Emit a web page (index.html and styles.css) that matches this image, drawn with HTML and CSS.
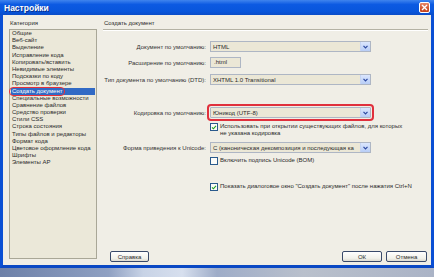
FILE: index.html
```html
<!DOCTYPE html>
<html lang="ru">
<head>
  <meta charset="UTF-8">
  <title>Настройки</title>
  <link rel="stylesheet" href="styles.css">
</head>
<body>
  <div class="window">
    <div class="titlebar">
      <span class="title">Настройки</span>
      <span class="close">
        <svg width="7" height="7" viewBox="0 0 7 7"><path d="M1 1L6 6M6 1L1 6" stroke="#fff" stroke-width="1.4"/></svg>
      </span>
    </div>

    <div class="client">
      <!-- список категорий -->
      <div class="side">
        <div class="caption">Категория</div>
        <ul class="list">
          <li>Общие</li>
          <li>Веб-сайт</li>
          <li>Выделение</li>
          <li>Исправление кода</li>
          <li>Копировать/вставить</li>
          <li>Невидимые элементы</li>
          <li>Подсказки по коду</li>
          <li>Просмотр в браузере</li>
          <li class="selected"><span class="mark">Создать документ</span></li>
          <li>Специальные возможности</li>
          <li>Сравнение файлов</li>
          <li>Средство проверки</li>
          <li>Стили CSS</li>
          <li>Строка состояния</li>
          <li>Типы файлов и редакторы</li>
          <li>Формат кода</li>
          <li>Цветовое оформление кода</li>
          <li>Шрифты</li>
          <li>Элементы AP</li>
        </ul>
      </div>

      <!-- правая часть -->
      <div class="panel">
        <div class="panel-head">Создать документ</div>

        <div class="form">
          <div class="row r1">
            <span class="label">Документ по умолчанию:</span>
            <span class="select"><span class="value">HTML</span><span class="arrow"><svg width="5" height="4" viewBox="0 0 5 4"><path d="M0.5 0.8L2.5 2.8L4.5 0.8" fill="none" stroke="#2b48a0" stroke-width="1.2"/></svg></span></span>
          </div>
          <div class="row r2">
            <span class="label">Расширение по умолчанию:</span>
            <span class="textbox">.html</span>
          </div>
          <div class="row r3">
            <span class="label">Тип документа по умолчанию (DTD):</span>
            <span class="select"><span class="value">XHTML 1.0 Transitional</span><span class="arrow"><svg width="5" height="4" viewBox="0 0 5 4"><path d="M0.5 0.8L2.5 2.8L4.5 0.8" fill="none" stroke="#2b48a0" stroke-width="1.2"/></svg></span></span>
          </div>
          <div class="row r4">
            <span class="label">Кодировка по умолчанию:</span>
            <span class="select marked"><span class="value">Юникод (UTF-8)</span><span class="arrow"><svg width="5" height="4" viewBox="0 0 5 4"><path d="M0.5 0.8L2.5 2.8L4.5 0.8" fill="none" stroke="#2b48a0" stroke-width="1.2"/></svg></span></span>
          </div>
          <div class="check c1">
            <span class="box on"><svg width="7" height="7" viewBox="0 0 7 7"><path d="M1.2 3.4L2.8 5L5.8 1.6" fill="none" stroke="#21a121" stroke-width="1.3"/></svg></span>
            <span class="text">Использовать при открытии существующих файлов, для которых<br>не указана кодировка</span>
          </div>
          <div class="row r5">
            <span class="label">Форма приведения к Unicode:</span>
            <span class="select"><span class="value">C (каноническая декомпозиция и последующая ка</span><span class="arrow"><svg width="5" height="4" viewBox="0 0 5 4"><path d="M0.5 0.8L2.5 2.8L4.5 0.8" fill="none" stroke="#2b48a0" stroke-width="1.2"/></svg></span></span>
          </div>
          <div class="check c2">
            <span class="box"></span>
            <span class="text">Включить подпись Unicode (BOM)</span>
          </div>
          <div class="check c3">
            <span class="box on"><svg width="7" height="7" viewBox="0 0 7 7"><path d="M1.2 3.4L2.8 5L5.8 1.6" fill="none" stroke="#21a121" stroke-width="1.3"/></svg></span>
            <span class="text">Показать диалоговое окно "Создать документ" после нажатия Ctrl+N</span>
          </div>
        </div>

        <div class="buttons">
          <span class="btn help">Справка</span>
          <span class="btn ok">ОК</span>
          <span class="btn cancel">Отмена</span>
        </div>
      </div>
    </div>
  </div>
  <div class="taskbar"></div>
</body>
</html>
```
FILE: styles.css
```css
html, body {
  margin: 0;
  padding: 0;
}

body {
  width: 434px;
  height: 277px;
  overflow: hidden;
  font-family: "Liberation Sans", Arial, sans-serif;
  font-size: 6px;
  color: #2a2a2a;
  background: #9aa6c0;
}

.window {
  height: 268px;
  box-sizing: border-box;
  display: flex;
  flex-direction: column;
  border-left: 3px solid #0a4fd4;
  border-right: 3px solid #0a4fd4;
  border-bottom: 3px solid #0a48c4;
}

/* заголовок окна */
.titlebar {
  height: 15px;
  margin: 0 -3px;
  padding: 0 4px 0 4px;
  display: flex;
  align-items: center;
  justify-content: space-between;
  background: linear-gradient(#3f84ee, #0c5ae2 30%, #0856dc 75%, #0a4cc8);
}

.title {
  color: #fff;
  font-weight: bold;
  font-size: 8.5px;
  text-shadow: 1px 1px 0 #0a2f8a;
}

.close {
  width: 11px;
  height: 11px;
  box-sizing: border-box;
  display: flex;
  align-items: center;
  justify-content: center;
  border: 1px solid #fff;
  border-radius: 2px;
  background: linear-gradient(#e8896a, #d2542f 60%, #c2431f);
}

/* рабочая область */
.client {
  flex: 1;
  display: grid;
  grid-template-columns: 88px 1fr;
  column-gap: 6px;
  padding: 4px 3px 3px 6px;
  background: #f0eee6;
}

.side {
  display: flex;
  flex-direction: column;
}

.caption {
  height: 10px;
  line-height: 9px;
  padding-left: 1px;
}

.list {
  flex: 1;
  margin: 0 0 3px 0;
  padding: 0 1px;
  list-style: none;
  background: #ebe8d9;
  border: 1px solid #a9a797;
}

.list li {
  height: 7.2px;
  line-height: 7.2px;
  padding-left: 1px;
  white-space: nowrap;
}

.list li.selected {
  background: #316ac5;
  color: #fff;
}

.mark {
  display: inline-block;
  margin-left: -2px;
  padding: 0 2px;
  outline: 1.5px solid #e8303a;
  border-radius: 3px;
}

.panel {
  display: flex;
  flex-direction: column;
}

.panel-head {
  height: 10px;
  line-height: 9px;
  padding-left: 1px;
  border-bottom: 1px solid #b4b2a4;
  box-shadow: 0 1px 0 #fff;
}

/* форма */
.row {
  display: flex;
  align-items: center;
  height: 11px;
}

.label {
  width: 107px;
  box-sizing: border-box;
  padding-right: 4px;
  text-align: right;
  white-space: nowrap;
  color: #333;
}

.select {
  width: 161px;
  height: 11px;
  box-sizing: border-box;
  display: flex;
  align-items: center;
  border: 1px solid #aeb6c4;
  background: #ebe7d6;
}

.select .value {
  flex: 1;
  white-space: nowrap;
  padding-left: 2px;
}

.arrow {
  width: 9px;
  height: 9px;
  display: flex;
  align-items: center;
  justify-content: center;
  background: linear-gradient(#dbe6fd, #b8cdf6);
  border-left: 1px solid #c5d4f2;
}

.select.marked {
  outline: 2px solid #e0303c;
  outline-offset: 1px;
  border-radius: 1px;
}

.textbox {
  width: 31px;
  height: 11px;
  box-sizing: border-box;
  border: 1px solid #aeb6c4;
  background: #ebe7d6;
  padding-left: 3px;
  line-height: 9px;
}

.r1 { margin-top: 11px; }
.r2 { margin-top: 5px; }
.r3 { margin-top: 6px; }
.r4 { margin-top: 22px; }
.r5 { margin-top: 5px; }

.check {
  display: flex;
  align-items: flex-start;
  margin-left: 107px;
  gap: 2px;
}

.check .text {
  line-height: 7px;
}

.box {
  width: 8px;
  height: 8px;
  box-sizing: border-box;
  flex: none;
  display: flex;
  align-items: center;
  justify-content: center;
  border: 1px solid #2a5a8c;
  background: #fbfbf8;
}

.c1 { margin-top: 5px; }
.c2 { margin-top: 4px; }
.c3 { margin-top: 18px; }

/* кнопки */
.buttons {
  margin-top: auto;
  display: flex;
  gap: 4px;
  padding: 0 1px 0 7px;
}

.btn {
  height: 11px;
  box-sizing: border-box;
  display: flex;
  align-items: center;
  justify-content: center;
  border: 1px solid #3a4a6a;
  border-radius: 2px;
  background: linear-gradient(#ffffff, #f2f1ea 70%, #dcdad0);
}

.help { width: 39px; }
.ok { width: 40px; margin-left: auto; }
.cancel { width: 41px; }

.taskbar {
  height: 9px;
  background: linear-gradient(to right, #6d80a8, #8fa0c2 25%, #c8d3e6 33%, #d7dfee 42%, #9eacc8 50%, #b9c0cc 70%, #aab3c6);
}
```
